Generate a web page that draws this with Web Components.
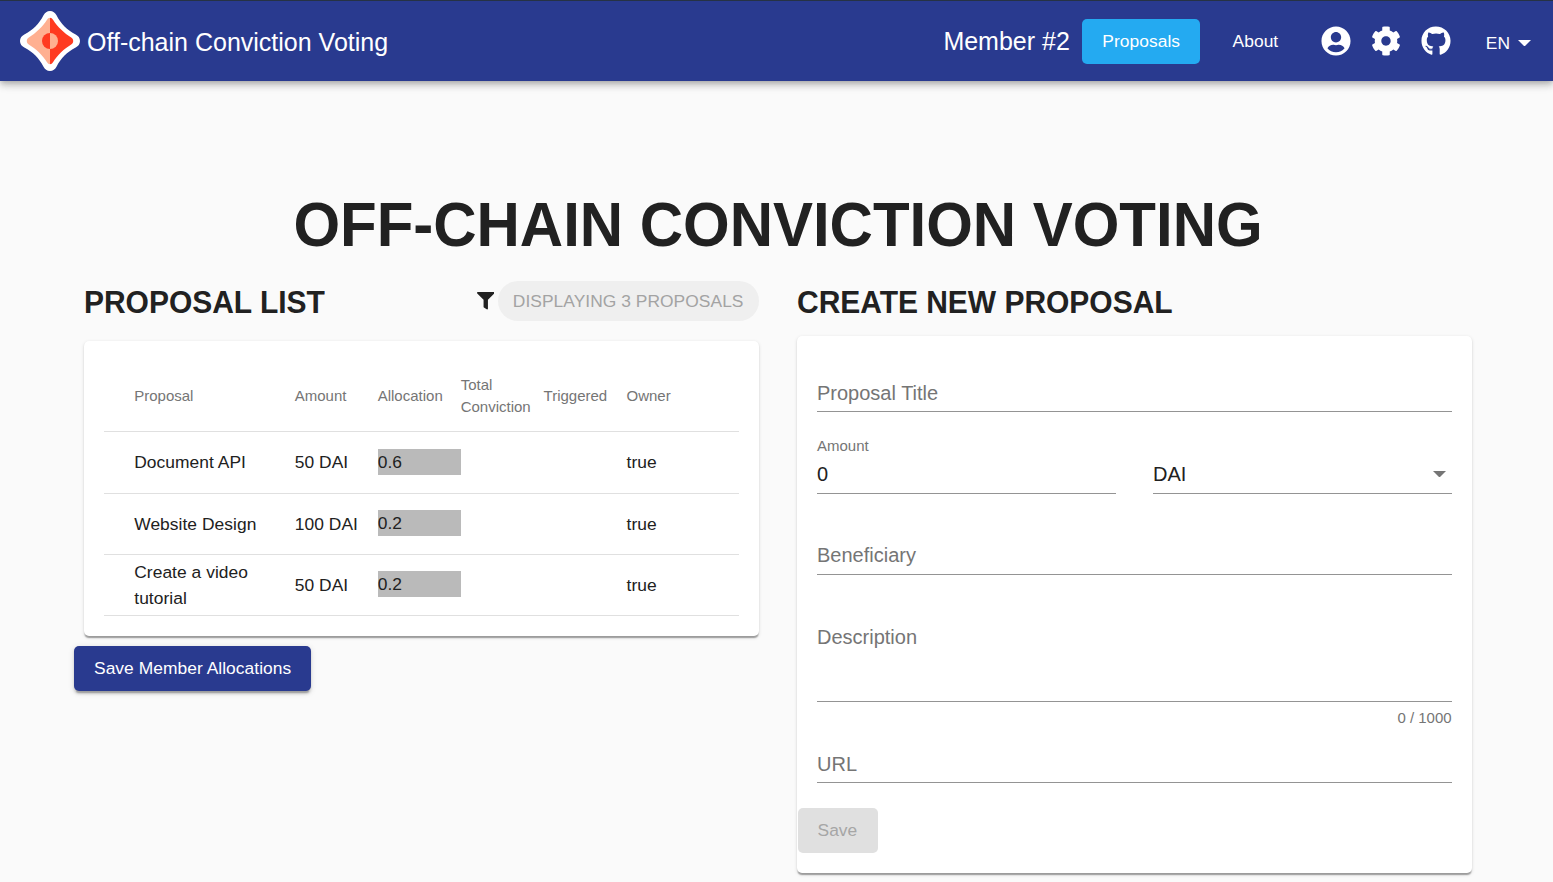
<!DOCTYPE html>
<html lang="en">
<head>
<meta charset="utf-8">
<title>Off-chain Conviction Voting</title>
<style>
html,body{margin:0;height:100%}
body{background:#fafafa;color:#212121;font-family:"Liberation Sans",Arial,sans-serif;font-size:17.4px;letter-spacing:.045px;overflow:hidden}
</style>
</head>
<body>
<voting-app></voting-app>
<script>
const define = (name, css, html) => customElements.define(name, class extends HTMLElement {
  constructor() {
    super();
    const t = document.createElement('template');
    t.innerHTML = `<style>*{box-sizing:border-box}${css}</style>${html}`;
    this.attachShadow({ mode: 'open' }).append(t.content.cloneNode(true));
  }
});

const ICONS = {
  user: ['0 0 496 512', 'M248 8C111 8 0 119 0 256s111 248 248 248 248-111 248-248S385 8 248 8zm0 96c48.6 0 88 39.4 88 88s-39.4 88-88 88-88-39.4-88-88 39.4-88 88-88zm0 344c-58.7 0-111.3-26.6-146.5-68.2 18.8-35.4 55.6-59.8 98.5-59.8 2.4 0 4.8.4 7.1 1.1 13 4.2 26.6 6.9 40.9 6.9 14.3 0 28-2.7 40.9-6.9 2.3-.7 4.7-1.1 7.1-1.1 42.9 0 79.7 24.4 98.5 59.8C359.3 421.4 306.7 448 248 448z'],
  cog: ['0 0 512 512', 'M487.4 315.7l-42.6-24.6c4.3-23.2 4.3-47 0-70.2l42.6-24.6c4.9-2.8 7.1-8.6 5.5-14-11.1-35.6-30-67.8-54.7-94.6-3.8-4.1-10-5.1-14.8-2.3L380.8 110c-17.9-15.4-38.5-27.3-60.8-35.1V25.8c0-5.6-3.9-10.5-9.4-11.7-36.7-8.2-74.3-7.8-109.2 0-5.5 1.2-9.4 6.1-9.4 11.7V75c-22.2 7.9-42.8 19.8-60.8 35.1L88.7 85.5c-4.9-2.8-11-1.9-14.8 2.3-24.7 26.7-43.6 58.9-54.7 94.6-1.7 5.4.6 11.2 5.5 14L67.3 221c-4.3 23.2-4.3 47 0 70.2l-42.6 24.6c-4.9 2.8-7.1 8.6-5.5 14 11.1 35.6 30 67.8 54.7 94.6 3.8 4.1 10 5.1 14.8 2.3l42.6-24.6c17.9 15.4 38.5 27.3 60.8 35.1v49.2c0 5.6 3.9 10.5 9.4 11.7 36.7 8.2 74.3 7.8 109.2 0 5.5-1.2 9.4-6.1 9.4-11.7v-49.2c22.2-7.9 42.8-19.8 60.8-35.1l42.6 24.6c4.9 2.8 11 1.9 14.8-2.3 24.7-26.7 43.6-58.9 54.7-94.6 1.5-5.5-.7-11.3-5.6-14.1zM256 336c-44.1 0-80-35.9-80-80s35.9-80 80-80 80 35.9 80 80-35.9 80-80 80z'],
  github: ['0 0 496 512', 'M165.9 397.4c0 2-2.3 3.6-5.2 3.6-3.3.3-5.6-1.3-5.6-3.6 0-2 2.3-3.6 5.2-3.6 3-.3 5.6 1.3 5.6 3.6zm-31.1-4.5c-.7 2 1.3 4.3 4.3 4.9 2.6 1 5.6 0 6.2-2s-1.3-4.3-4.3-5.2c-2.6-.7-5.5.3-6.2 2.3zm44.2-1.7c-2.9.7-4.9 2.6-4.6 4.9.3 2 2.9 3.3 5.9 2.6 2.9-.7 4.9-2.6 4.6-4.6-.3-1.9-3-3.2-5.9-2.9zM244.8 8C106.1 8 0 113.3 0 252c0 110.9 69.8 205.8 169.5 239.2 12.8 2.3 17.3-5.6 17.3-12.1 0-6.2-.3-40.4-.3-61.4 0 0-70 15-84.7-29.8 0 0-11.4-29.1-27.8-36.6 0 0-22.9-15.7 1.6-15.4 0 0 24.9 2 38.6 25.8 21.9 38.6 58.6 27.5 72.9 20.9 2.3-16 8.8-27.1 16-33.7-55.9-6.2-112.3-14.3-112.3-110.5 0-27.5 7.6-41.3 23.6-58.9-2.6-6.5-11.1-33.3 2.6-67.9 20.9-6.5 69 27 69 27 20-5.6 41.5-8.5 62.8-8.5s42.8 2.9 62.8 8.5c0 0 48.1-33.6 69-27 13.7 34.7 5.2 61.4 2.6 67.9 16 17.7 25.8 31.5 25.8 58.9 0 96.5-58.9 104.2-114.8 110.5 9.2 7.9 17 22.9 17 46.4 0 33.7-.3 75.4-.3 83.6 0 6.5 4.6 14.4 17.3 12.1C428.2 457.8 496 362.9 496 252 496 113.3 383.5 8 244.8 8z'],
  filter: ['0 0 512 512', 'M487.976 0H24.028C2.71 0-8.047 25.866 7.058 40.971L192 225.941V432c0 7.831 3.821 15.17 10.237 19.662l80 55.98C298.02 518.69 320 507.493 320 487.98V225.941l184.947-184.97C520.021 25.896 509.338 0 487.976 0z'],
  caret: ['0 0 20 10', 'M0 0h20L10 10z']
};

// The icon's name attribute is read once the element is connected.
customElements.define('app-icon', class extends HTMLElement {
  connectedCallback() {
    if (this.shadowRoot) return;
    const [box, d] = ICONS[this.getAttribute('name')];
    this.attachShadow({ mode: 'open' }).innerHTML =
      `<style>:host{display:block;flex:none}svg{display:block;width:100%;height:100%;fill:currentColor}</style><svg viewBox="${box}"><path d="${d}"/></svg>`;
  }
});

define('app-logo', ':host{display:block;width:60px;height:60px;flex:none}svg{display:block}', `
<svg width="60" height="60" viewBox="0 0 60 60">
<path fill="#fff" d="M30 0c3 0 5 1.700 6.500 4.300C41 13 47 19 55.700 23.500c2.600 1.300 4.300 3.500 4.300 6.500s-1.700 5.200-4.300 6.500C47 41 41 47 36.500 55.700 35.200 58.300 33 60 30 60s-5.200-1.700-6.500-4.300C19 47 13 41 4.300 36.500 1.700 35.200 0 33 0 30s1.700-5.200 4.300-6.500C13 19 19 13 23.500 4.300 25 1.700 27 0 30 0z"/>
<path fill="#ffb091" d="M30 6.800c-1.300 0-2.200.7-3 2C23 15.500 15.500 22.500 8.800 26.500c-1.400.9-2 2.200-2 3.500s.6 2.600 2 3.500C15.500 37.500 23 44.500 27 51.200c.8 1.300 1.700 2 3 2z"/>
<path fill="#ff3a20" d="M30 6.800c1.300 0 2.200.7 3 2C37 15.500 44.500 22.500 51.200 26.500c1.400.9 2 2.200 2 3.500s-.6 2.600-2 3.500C44.500 37.500 37 44.500 33 51.200c-.8 1.300-1.700 2-3 2z"/>
<path fill="#ff3a20" d="M30 22a8 8 0 0 0 0 16z"/><path fill="#ffb091" d="M30 22a8 8 0 0 1 0 16z"/>
</svg>`);

define('app-button', `
:host{display:block;flex:none}
button{display:block;height:45px;padding:0 20px;border:0;border-radius:5px;background:transparent;color:inherit;font:17.4px/45px "Liberation Sans",Arial,sans-serif;letter-spacing:.045px;white-space:nowrap}
:host([kind=active]) button{background:#24aaf1}
:host([kind=primary]) button{background:#293a8f;color:#fff;box-shadow:0 3.75px 1.25px -2.5px rgba(0,0,0,.2),0 2.5px 2.5px rgba(0,0,0,.14),0 1.25px 6.25px rgba(0,0,0,.12)}
:host([kind=disabled]) button{padding:0 20.500px 0 19.500px;background:#e0e0e0;color:#a6a6a6}
`, '<button><slot></slot></button>');

define('app-toolbar', `
:host{display:block;position:relative;border-top:1px solid #263245;background:#293a8f;color:#fff;box-shadow:0 2.5px 5px -1.25px rgba(0,0,0,.2),0 5px 6.25px rgba(0,0,0,.14),0 1.25px 12.5px rgba(0,0,0,.12)}
header{display:flex;align-items:center;height:80px;padding:0 22px 0 20px}
.brand{margin:2px auto 0 7px;font-size:25px;line-height:30px;letter-spacing:0}
.member{margin:0 12.500px 0 0;font-size:25px;line-height:30px;letter-spacing:0}
nav{display:flex;gap:12.500px;margin-top:1px}
.icons{display:flex;margin-left:12.500px}
.icons span{display:flex;justify-content:center;width:50px}
.icons app-icon{width:30px;height:30px}
.lang{display:flex;align-items:center;gap:8px;margin:4px 0 0 25px;line-height:22px}
.lang app-icon{width:13px;height:6.500px}
`, `<header><app-logo></app-logo><div class="brand">Off-chain Conviction Voting</div>
<div class="member">Member #2</div>
<nav><app-button kind="active">Proposals</app-button><app-button>About</app-button></nav>
<div class="icons"><span><app-icon name="user"></app-icon></span><span><app-icon name="cog"></app-icon></span><span><app-icon name="github"></app-icon></span></div>
<div class="lang"><span>EN</span><app-icon name="caret"></app-icon></div></header>`);

define('app-card', `:host{display:block;padding:20px;border-radius:5px;background:#fff;box-shadow:0 2.5px 1.25px -1.25px rgba(0,0,0,.2),0 1.25px 1.25px rgba(0,0,0,.14),0 1.25px 3.75px rgba(0,0,0,.12)}`, '<slot></slot>');

const rows = [['Document API', '50 DAI', '0.6'], ['Website Design', '100 DAI', '0.2'], ['Create a video tutorial', '50 DAI', '0.2']];
define('proposal-table', `
:host{display:block}
.row{display:grid;grid-template-columns:160.500px repeat(4,82.950px) 1fr;align-items:center;height:61px;padding-left:30.250px;border-bottom:1px solid #e0e0e0;line-height:26px}
.head{height:71px;font-size:15px;line-height:22px;letter-spacing:0;color:#757575}
.row:nth-of-type(2){height:62px;padding-bottom:1px}
.row>:first-child{padding-right:20px}
.alloc{height:26px;margin-bottom:2px;background:#bababa}
.row:nth-of-type(2) .alloc{margin-bottom:0}
`, `<div class="row head"><span>Proposal</span><span>Amount</span><span>Allocation</span><span>Total Conviction</span><span>Triggered</span><span>Owner</span></div>` +
rows.map(r => `<div class="row"><span>${r[0]}</span><span>${r[1]}</span><span class="alloc">${r[2]}</span><span></span><span></span><span>true</span></div>`).join(''));

define('form-field', `
:host{display:block;border-bottom:1px solid #949494;padding-bottom:6px;font-size:20px;line-height:24px;letter-spacing:0;color:#757575}
::slotted([slot=label]){display:block;font-size:15px;line-height:18px;margin-bottom:7px}
.value{display:flex;align-items:center;justify-content:space-between}
::slotted(b){font-weight:400;color:#212121}
::slotted(app-icon){width:13px;height:6.500px;margin-right:6px}
`, '<slot name="label"></slot><div class="value"><slot></slot></div>');

define('proposal-form', `
:host{display:block;padding-top:25px}
.pair{display:grid;grid-template-columns:299px 299px;gap:37px;margin-top:25px;align-items:end}
.pair form-field,.ben{padding-bottom:7px}
.ben{margin-top:49px}
.desc{margin-top:50px;padding-bottom:52px}
.hint{margin-top:7px;padding-right:.4px;text-align:right;font-size:15px;line-height:18px;letter-spacing:0;color:#757575}
.url{margin-top:25px}
app-button{margin:25px 0 0 -19px}
`, `<form-field>Proposal Title</form-field>
<div class="pair"><form-field><span slot="label">Amount</span><b>0</b></form-field><form-field><b>DAI</b><app-icon name="caret"></app-icon></form-field></div>
<form-field class="ben">Beneficiary</form-field>
<form-field class="desc">Description</form-field>
<div class="hint">0 / 1000</div>
<form-field class="url">URL</form-field>
<app-button kind="disabled">Save</app-button>`);

define('voting-app', `
:host{display:block}
main{padding:109px 81px 0 84px}
h1,h2{letter-spacing:-.03px;transform:scaleY(1.045);transform-origin:0 50%}
h1{margin:0;text-align:center;font-size:60px;line-height:70px;white-space:nowrap}
h2{margin:3px 0 0;font-size:30px;line-height:38px}
.cols{display:grid;grid-template-columns:675px 675px;gap:38px;margin-top:21px;align-items:start}
.bar{display:flex;align-items:flex-start;height:60px}
.right .bar{height:55px}
.filter{display:flex;align-items:center;gap:4px;margin-left:auto}
.filter app-icon{width:17.500px;height:17.500px}
.chip{height:40px;padding:0 15.500px 0 14.500px;border-radius:20px;background:#efefef;color:#a3a3a3;line-height:40px}
.save{margin:10px 0 0 -10px;width:max-content}
`, `<app-toolbar></app-toolbar>
<main><h1>OFF-CHAIN CONVICTION VOTING</h1>
<div class="cols">
<section><div class="bar"><h2>PROPOSAL LIST</h2><div class="filter"><app-icon name="filter"></app-icon><span class="chip">DISPLAYING 3 PROPOSALS</span></div></div>
<app-card><proposal-table></proposal-table></app-card>
<app-button class="save" kind="primary">Save Member Allocations</app-button></section>
<section class="right"><div class="bar"><h2>CREATE NEW PROPOSAL</h2></div>
<app-card><proposal-form></proposal-form></app-card></section>
</div></main>`);
</script>
</body>
</html>
